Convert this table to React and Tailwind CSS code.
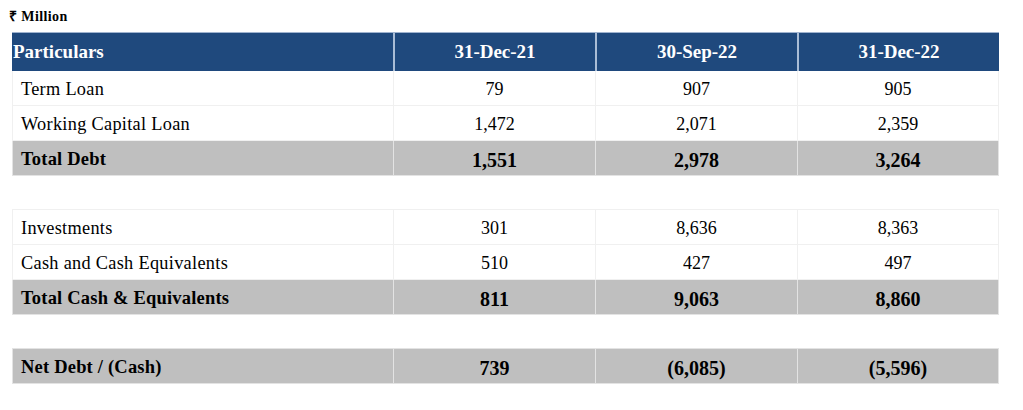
import React from "react";

const serif = { fontFamily: '"Liberation Serif", "Times New Roman", serif' };

function Row({ label, values, kind }) {
  const gray = kind === "total";
  const rowCls = gray ? "bg-[#bfbfbf] font-bold" : "bg-white";
  const border = gray ? "border-[#e3e3e3]" : "border-[#f0f0f0]";
  const labelSize = gray ? "text-[18.5px] tracking-[0.2px]" : "text-[18.3px] tracking-[0.3px]";
  const numSize = gray ? "text-[20px]" : "text-[18px]";
  return (
    <div className={`grid grid-cols-[381px_202px_202px_202px] h-[35px] ${rowCls}`}>
      <div className={`flex items-center pl-[8px] pt-[3px] border-l border-b ${border} ${labelSize} text-black`}>
        {label}
      </div>
      {values.map((v, i) => (
        <div
          key={i}
          className={`flex items-center justify-center pt-[3px] border-l border-b ${border} ${i === 2 ? "border-r" : ""} ${numSize} text-black`}
        >
          {v}
        </div>
      ))}
    </div>
  );
}

export default function App() {
  return (
    <div className="w-[1023px] h-[410px] bg-white" style={serif}>
      <div className="pt-[8px] pl-[9px] text-[14px] tracking-[0.4px] font-bold text-black leading-[18px]">₹ Million</div>
      <div className="ml-[12px] mt-[6px] w-[987px]">
        <div className="grid grid-cols-[381px_202px_202px_202px] h-[39px] bg-[#1f497d] text-white font-bold text-[19px] border-t border-[#9fb3cf]">
          <div className="flex items-center pl-[1px] pt-[1px]">Particulars</div>
          <div className="flex items-center justify-center pt-[1px] border-l-2 border-[#a9bdd6]">31-Dec-21</div>
          <div className="flex items-center justify-center pt-[1px] border-l-2 border-[#a9bdd6]">30-Sep-22</div>
          <div className="flex items-center justify-center pt-[1px] border-l-2 border-[#a9bdd6]">31-Dec-22</div>
        </div>
        <Row label="Term Loan" values={["79", "907", "905"]} />
        <Row label="Working Capital Loan" values={["1,472", "2,071", "2,359"]} />
        <Row label="Total Debt" values={["1,551", "2,978", "3,264"]} kind="total" />
        <div className="h-[34px] border-b border-[#f0f0f0]" />
        <Row label="Investments" values={["301", "8,636", "8,363"]} />
        <Row label="Cash and Cash Equivalents" values={["510", "427", "497"]} />
        <Row label="Total Cash & Equivalents" values={["811", "9,063", "8,860"]} kind="total" />
        <div className="h-[34px] border-b border-[#e3e3e3]" />
        <Row label="Net Debt / (Cash)" values={["739", "(6,085)", "(5,596)"]} kind="total" />
      </div>
    </div>
  );
}
